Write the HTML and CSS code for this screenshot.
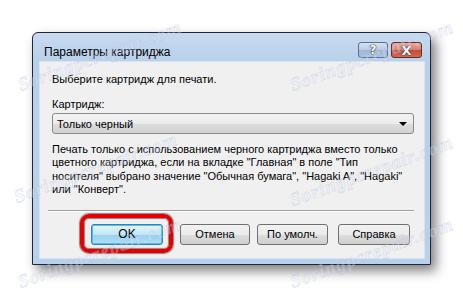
FILE: index.html
```html
<!DOCTYPE html>
<html lang="ru">
<head>
    <meta charset="UTF-8">
    <title>Параметры картриджа</title>
    <link rel="stylesheet" href="styles.css">
</head>
<body>
    <div class="dialog">
        <div class="titlebar">
            <span class="title">Параметры картриджа</span>
            <div class="caption-buttons">
                <button class="cap-btn help">?</button>
                <button class="cap-btn close">X</button>
            </div>
        </div>

        <div class="client">
            <p class="intro">Выберите картридж для печати.</p>
            <p class="label">Картридж:</p>
            <div class="combo">
                <span>Только черный</span>
                <span class="arrow"></span>
            </div>
            <p class="note">Печать только с использованием черного картриджа вместо только<br>цветного картриджа, если на вкладке "Главная" в поле "Тип<br>носителя" выбрано значение "Обычная бумага", "Hagaki A", "Hagaki"<br>или "Конверт".</p>
            <div class="separator"></div>
            <div class="buttons">
                <div class="ok-wrap">
                    <button class="btn default" id="ok">OK</button>
                    <span class="highlight"></span>
                </div>
                <button class="btn" id="cancel">Отмена</button>
                <button class="btn" id="defaults">По умолч.</button>
                <button class="btn" id="help">Справка</button>
            </div>
        </div>
    </div>

    <!-- watermark of the source site -->
    <span class="mark mark-a">Soringpcrepair.com</span>
    <span class="mark mark-b">Soringpcrepair.com</span>
    <span class="mark mark-c">Soringpcrepair.com</span>
    <span class="mark mark-d">Soringpcrepair.com</span>
    <span class="mark mark-e">Soringpcrepair.com</span>
    <span class="mark mark-f">Soringpcrepair.com</span>
</body>
</html>
```

FILE: styles.css
```css
* {
    margin: 0;
    padding: 0;
    box-sizing: border-box;
}

body {
    position: relative;
    width: 463px;
    height: 297px;
    overflow: hidden;
    background-color: #ffffff;
    font-family: 'Liberation Sans', Arial, sans-serif;
    font-size: 11px;
    color: #000000;
}

.dialog {
    width: 399px;
    height: 233px;
    margin: 32px 0 0 32px;
    display: flex;
    flex-direction: column;
    border: 1px solid #1d2938;
    border-radius: 6px 6px 0 0;
    background: linear-gradient(#c7daef, #b8d0ea 30px, #b9d1ea);
    box-shadow: 5px 6px 12px rgba(0, 0, 0, 0.5);
}

.titlebar {
    height: 29px;
    display: flex;
    align-items: flex-start;
}

.title {
    margin: 12px 0 0 11px;
    font-size: 12px;
    line-height: 14px;
    color: #000000;
}

.caption-buttons {
    margin: 9px 8px 0 auto;
    display: flex;
    gap: 3px;
}

.cap-btn {
    width: 30px;
    height: 16px;
    border: 1px solid #5b6f88;
    border-radius: 3px;
    font-family: 'DejaVu Sans', sans-serif;
    font-weight: bold;
    font-size: 12px;
    line-height: 13px;
    color: #ffffff;
    text-shadow: 0 0 1px #1f2a38, 0 0 1px #1f2a38, 0 0 1px #1f2a38;
}

.cap-btn.help {
    background: linear-gradient(#d6e3f1, #b6cbe4 50%, #9db7d7 51%, #a9c3e0);
}

.cap-btn.close {
    width: 31px;
    font-size: 13px;
    border-color: #6e2a22;
    background: linear-gradient(#e9a99b, #d7806c 50%, #c04a35 51%, #d06b52);
}

.client {
    flex: 1;
    margin: 0 6px 6px 7px;
    padding: 11px 10px 0 12px;
    background-color: #f0f0f0;
    outline: 1px solid #d6e4f3;
}

.intro,
.label,
.note {
    line-height: 13px;
}

.label {
    margin-top: 12px;
}

.combo {
    height: 21px;
    margin-top: 2px;
    display: flex;
    align-items: center;
    justify-content: space-between;
    padding: 0 6px 0 4px;
    border: 1px solid #8a8a8a;
    border-radius: 3px;
    background: linear-gradient(#f4f4f4, #ebebeb 50%, #dddddd 51%, #d2d2d2);
}

.arrow {
    width: 0;
    height: 0;
    border-left: 4px solid transparent;
    border-right: 4px solid transparent;
    border-top: 4px solid #000000;
}

.note {
    margin-top: 9px;
    line-height: 13.4px;
    white-space: nowrap;
}

.separator {
    margin: 13px 0 0 -4px;
    width: 366px;
    height: 2px;
    border-top: 1px solid #a0a0a0;
    border-bottom: 1px solid #ffffff;
}

.buttons {
    margin-top: 12px;
    padding-left: 39px;
    display: flex;
}

.ok-wrap {
    position: relative;
}

.btn {
    width: 72px;
    height: 21px;
    border: 1px solid #707070;
    border-radius: 3px;
    background: linear-gradient(#f2f2f2, #ebebeb 50%, #dddddd 51%, #cfcfcf);
    font-family: 'Liberation Sans', Arial, sans-serif;
    font-size: 11px;
    color: #000000;
}

.btn.default {
    border-color: #3c7fb1;
    background: linear-gradient(#e5f4fc, #c4e5f6 50%, #98d1ef 51%, #b2dcf2);
    box-shadow: inset 0 0 0 1px #48c2f6;
    font-size: 12px;
}

#cancel {
    width: 70px;
    margin-left: 17px;
}

#defaults {
    width: 71px;
    margin-left: 7px;
}

#help {
    margin-left: 10px;
}

.highlight {
    position: absolute;
    left: -11px;
    right: -10px;
    top: -10px;
    bottom: -8px;
    border: 4px solid #e60000;
    border-radius: 9px;
    box-shadow: 0 0 1px 1px rgba(0, 0, 0, 0.45), inset 0 0 1px 1px rgba(0, 0, 0, 0.45);
}

/* watermark, drawn over the whole picture */
.mark {
    position: absolute;
    transform: rotate(-20deg);
    transform-origin: left bottom;
    font-family: 'Liberation Serif', serif;
    font-style: italic;
    font-weight: bold;
    font-size: 19px;
    line-height: 20px;
    letter-spacing: 1px;
    white-space: nowrap;
    color: rgba(235, 238, 250, 0.3);
    -webkit-text-stroke: 0.6px rgba(160, 175, 215, 0.35);
}

.mark-a { left: 22px; top: 75px; }
.mark-b { left: 294px; top: 75px; }
.mark-c { left: 18px; top: 187px; }
.mark-d { left: 294px; top: 190px; }
.mark-e { left: 22px; top: 272px; }
.mark-f { left: 294px; top: 272px; }
```
